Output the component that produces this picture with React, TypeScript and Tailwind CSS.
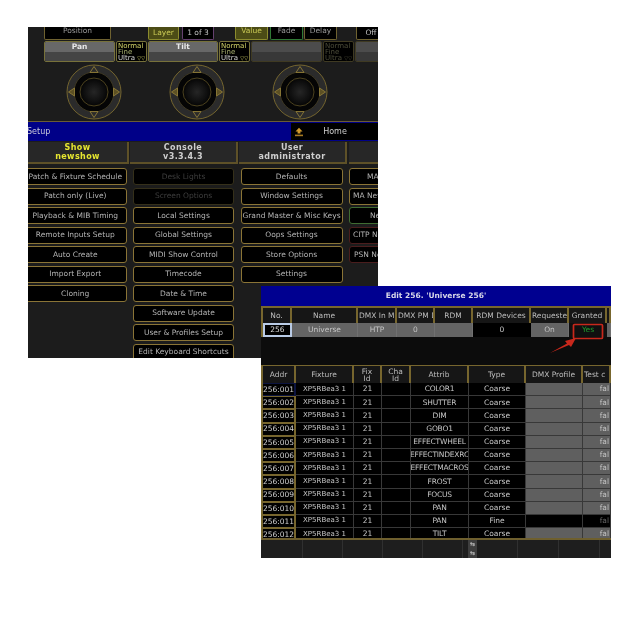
import { Fragment } from "react";

const font = "font-['DejaVu_Sans',sans-serif]";

const col1 = ["Patch & Fixture Schedule", "Patch only (Live)", "Playback & MIB Timing", "Remote Inputs Setup", "Auto Create", "Import Export", "Cloning"];
const col2 = ["Desk Lights", "Screen Options", "Local Settings", "Global Settings", "MIDI Show Control", "Timecode", "Date & Time", "Software Update", "User & Profiles Setup", "Edit Keyboard Shortcuts"];
const col3 = ["Defaults", "Window Settings", "Grand Master & Misc Keys", "Oops Settings", "Store Options", "Settings"];
const col4 = [
  { label: "MA", cls: "border-[#8a7436] pl-[17px]" },
  { label: "MA Net", cls: "border-[#8a7436] pl-[3px]" },
  { label: "Net", cls: "border-[#3f6b32] pl-[20px]" },
  { label: "CITP Ne", cls: "border-[#4a1d1d] pl-[3px]" },
  { label: "PSN Ne", cls: "border-[#4a1d1d] pl-[4px]" },
];

const rows = [
  ["256:001", "COLOR1", "Coarse"],
  ["256:002", "SHUTTER", "Coarse"],
  ["256:003", "DIM", "Coarse"],
  ["256:004", "GOBO1", "Coarse"],
  ["256:005", "EFFECTWHEEL", "Coarse"],
  ["256:006", "EFFECTINDEXRC", "Coarse"],
  ["256:007", "EFFECTMACROS", "Coarse"],
  ["256:008", "FROST", "Coarse"],
  ["256:009", "FOCUS", "Coarse"],
  ["256:010", "PAN", "Coarse"],
  ["256:011", "PAN", "Fine"],
  ["256:012", "TILT", "Coarse"],
];

function Encoder() {
  return (
    <svg width="58" height="58" viewBox="0 0 58 58" fill="none">
      <defs>
        <radialGradient id="knob" cx="50%" cy="50%" r="50%">
          <stop offset="0%" stopColor="#262626" />
          <stop offset="100%" stopColor="#050505" />
        </radialGradient>
      </defs>
      <circle cx="29" cy="29" r="27" fill="#2b2b2b" stroke="#7d6c30" strokeWidth="0.9" />
      <circle cx="29" cy="29" r="20" fill="#050505" stroke="#4c4426" strokeWidth="0.7" />
      <circle cx="29" cy="29" r="14" fill="url(#knob)" stroke="#6a5c2a" strokeWidth="0.7" />
      <path d="M29 3.5 L33 9.5 L25 9.5 Z" stroke="#8f7c38" strokeWidth="0.9" />
      <path d="M29 54.5 L33 48.5 L25 48.5 Z" stroke="#8f7c38" strokeWidth="0.9" />
      <path d="M3.5 29 L9.5 25 L9.5 33 Z" stroke="#8f7c38" strokeWidth="0.9" fill="#5c5024" />
      <path d="M54.5 29 L48.5 25 L48.5 33 Z" stroke="#8f7c38" strokeWidth="0.9" fill="#5c5024" />
    </svg>
  );
}

function TopKey({ label, w, cls, ml }: { label: string; w: string; cls: string; ml: string }) {
  return (
    <div className={`${w} ${ml} ${cls} h-[13px] shrink-0 border border-t-0 rounded-b-[2px] flex justify-center text-[7.5px] leading-[7.5px]`}>
      {label}
    </div>
  );
}

function Fader({ label, w, dim }: { label: string; w: string; dim?: boolean }) {
  return (
    <div className={`${w} h-[21px] shrink-0 border rounded-[2px] flex flex-col overflow-hidden ${dim ? "border-[#3f3a22]" : "border-[#77713a]"}`}>
      <div className={`h-[10px] text-center text-[7.5px] font-bold leading-[10px] text-[#e8e8e8] ${dim ? "bg-[#4c4c4c]" : "bg-[#686868]"}`}>{label}</div>
      <div className={`flex-1 ${dim ? "bg-[#383838]" : "bg-[#454545]"}`} />
    </div>
  );
}

function Mode({ dim }: { dim?: boolean }) {
  return (
    <div className={`relative w-[31px] h-[21px] shrink-0 border rounded-[2px] bg-black px-px text-[7px] leading-[6.2px] pt-px ${dim ? "border-[#3f3a22] text-[#4d4d3a]" : "border-[#77713a] text-[#d4d468]"}`}>
      <div>Normal</div>
      <div className={dim ? "" : "text-[#a8b070]"}>Fine</div>
      <div className={dim ? "" : "text-[#d8d8d8]"}>Ultra</div>
      <span className="absolute right-px bottom-0 text-[5px] leading-[6px]">▽▽</span>
    </div>
  );
}

function Tab({ top, bottom, w, active }: { top: string; bottom: string; w: string; active?: boolean }) {
  return (
    <div className={`${w} h-[22px] shrink-0 border-b-2 border-r-2 border-[#5e5128] bg-[#272727] flex flex-col items-center justify-center text-[8px] font-bold leading-[9px] tracking-[0.4px] ${active ? "text-[#e6e630]" : "text-[#cfcfcf]"}`}>
      <div>{top}</div>
      <div>{bottom}</div>
    </div>
  );
}

function MenuButton({ label, dim }: { label: string; dim?: boolean }) {
  return (
    <div className={`h-[17px] shrink-0 rounded-[3px] border bg-black flex items-center justify-center whitespace-nowrap overflow-hidden text-[7.5px] leading-none ${dim ? "border-[#35301a] text-[#3e3e3e]" : "border-[#8a7436] text-[#b4b4b4]"}`}>
      {label}
    </div>
  );
}

function HeadCell({ children, left }: { children?: React.ReactNode; left?: boolean }) {
  return (
    <div className={`bg-[#161616] border-r-2 border-[#77662e] flex items-center text-center text-[7.5px] leading-[7px] text-[#bdbdbd] whitespace-nowrap overflow-hidden ${left ? "justify-start pl-px" : "justify-center"}`}>
      {children}
    </div>
  );
}

function GrayCell({ children }: { children?: React.ReactNode }) {
  return <div className="bg-[#646464] border-r border-[#707070] flex items-center justify-center text-[7.5px] text-[#c4c4c4] overflow-hidden">{children}</div>;
}

function Cell({ children, cls }: { children?: React.ReactNode; cls?: string }) {
  return <div className={`bg-black border-r border-b border-[#383838] flex items-center justify-center whitespace-nowrap overflow-hidden text-[7.5px] leading-none text-[#c6c6c6] ${cls ?? ""}`}>{children}</div>;
}

export default function App() {
  return (
    <div className={`relative w-[640px] h-[640px] bg-white overflow-hidden blur-[0.45px] ${font}`}>
      {/* first console window */}
      <div className="absolute left-[28px] top-[27px] w-[350px] h-[331px] bg-[#1c1c1c] overflow-hidden flex flex-col">
        <div className="flex h-[13px] shrink-0 text-[#9a9a9a]">
          <TopKey label="Position" w="w-[67px]" ml="ml-[16px]" cls="border-[#6f6230] bg-black" />
          <TopKey label="Layer" w="w-[31px]" ml="ml-[37px]" cls="border-[#8c8c2e] bg-[#4c4c16] text-[#c9c955] pt-[2px]" />
          <TopKey label="1 of 3" w="w-[32px]" ml="ml-[3px]" cls="border-[#65406f] bg-black text-[#c0c0c0] pt-[2px]" />
          <TopKey label="Value" w="w-[33px]" ml="ml-[21px]" cls="border-[#8c8c2e] bg-[#4c4c16] text-[#c9c955]" />
          <TopKey label="Fade" w="w-[33px]" ml="ml-[2px]" cls="border-[#2f7a35] bg-black" />
          <TopKey label="Delay" w="w-[33px]" ml="ml-[1px]" cls="border-[#6f6230] bg-black" />
          <TopKey label="Off" w="w-[30px]" ml="ml-[19px]" cls="border-[#6f6230] bg-black text-[#c0c0c0] pt-[2px]" />
        </div>
        <div className="flex h-[21px] shrink-0 mt-px ml-[16px] gap-px">
          <Fader label="Pan" w="w-[71px]" />
          <Mode />
          <Fader label="Tilt" w="w-[70px]" />
          <Mode />
          <Fader label="" w="w-[71px]" dim />
          <Mode dim />
          <Fader label="" w="w-[40px]" dim />
        </div>
        <div className="flex h-[58px] shrink-0 mt-px ml-[37px] gap-[45px] items-center">
          <Encoder />
          <Encoder />
          <Encoder />
        </div>
        <div className="h-px shrink-0 bg-[#6b5c34]" />
        <div className="h-[19px] shrink-0 bg-[#000088] flex items-center justify-between text-[8px] text-[#c8c8d8] -ml-[1px]">
          <span>Setup</span>
          <div className="w-[87px] h-[17px] bg-black flex items-center text-[#d0d0d0]">
            <svg className="ml-[3px]" width="10" height="10" viewBox="0 0 10 10" fill="none">
              <path d="M5 0.8 L8.5 4.4 H6.4 V6.4 H3.6 V4.4 H1.5 Z" fill="#d19a2c" />
              <path d="M1 7.6 H9 V9.2 H1 Z" fill="#a87a22" />
            </svg>
            <span className="flex-1 text-center pr-[12px]">Home</span>
          </div>
        </div>
        <div className="flex gap-px mt-px shrink-0">
          <Tab top="Show" bottom="newshow" w="w-[101px]" active />
          <Tab top="Console" bottom="v3.3.4.3" w="w-[108px]" />
          <Tab top="User" bottom="administrator" w="w-[108px]" />
          <div className="w-[32px] h-[22px] border-b-2 border-[#5e5128] bg-[#272727] ml-px" />
        </div>
        <div className="flex gap-[6.5px] -ml-[4px] mt-[4px]">
          <div className="w-[102.5px] flex flex-col gap-[2.5px] shrink-0">
            {col1.map((l) => <MenuButton key={l} label={l} />)}
          </div>
          <div className="w-[101px] flex flex-col gap-[2.5px] shrink-0">
            {col2.map((l, i) => <MenuButton key={l} label={l} dim={i < 2} />)}
          </div>
          <div className="w-[102px] flex flex-col gap-[2.5px] shrink-0">
            {col3.map((l) => <MenuButton key={l} label={l} />)}
          </div>
          <div className="w-[102px] flex flex-col gap-[2.5px] shrink-0">
            {col4.map((b) => (
              <div key={b.label} className={`h-[17px] rounded-[3px] border bg-black flex items-center whitespace-nowrap text-[7.5px] text-[#b4b4b4] ${b.cls}`}>
                {b.label}
              </div>
            ))}
          </div>
        </div>
      </div>

      {/* edit universe window */}
      <div className="absolute left-[261px] top-[286px] w-[350px] h-[272px] bg-[#101010] overflow-hidden flex flex-col">
        <div className="h-[20px] shrink-0 bg-[#000090] flex items-center justify-center text-[7.5px] font-bold text-[#d8d8e8]">
          Edit 256. 'Universe 256'
        </div>
        <div className="h-[2px] shrink-0 bg-[#77662e]" />
        <div className="border-l-2 border-[#77662e] grid grid-cols-[29px_66px_39px_38px_38px_58px_38px_38px_4px] grid-rows-[15px_14px] shrink-0">
          <HeadCell>No.</HeadCell>
          <HeadCell>Name</HeadCell>
          <HeadCell left>DMX In Me</HeadCell>
          <HeadCell left>DMX PM De</HeadCell>
          <HeadCell>RDM</HeadCell>
          <HeadCell>RDM Devices</HeadCell>
          <HeadCell left>Requested</HeadCell>
          <HeadCell>Granted</HeadCell>
          <HeadCell />
          <div className="bg-black border-2 border-[#b9cbe6] flex items-center justify-center text-[7.5px] text-[#dcdcdc]">256</div>
          <GrayCell>Universe</GrayCell>
          <GrayCell>HTP</GrayCell>
          <GrayCell>0</GrayCell>
          <GrayCell />
          <div className="bg-black flex items-center justify-center text-[7.5px] text-[#c6c6c6]">0</div>
          <GrayCell>On</GrayCell>
          <div className="bg-[#101010] flex items-center justify-center text-[7.5px] text-[#1f9a2c]">Yes</div>
          <GrayCell />
        </div>
        <div className="h-[28px] shrink-0 bg-[#0c0c0c]" />
        <div className="h-px shrink-0 bg-[#77662e]" />
        <div className="border-l-2 border-[#77662e] grid grid-cols-[33px_58px_28px_29px_58px_57px_57px_28px] grid-rows-[17px] auto-rows-[13.2px] shrink-0 h-[172px] overflow-hidden">
          <HeadCell>Addr</HeadCell>
          <HeadCell>Fixture</HeadCell>
          <HeadCell>Fix<br />Id</HeadCell>
          <HeadCell>Cha<br />Id</HeadCell>
          <HeadCell>Attrib</HeadCell>
          <HeadCell>Type</HeadCell>
          <HeadCell>DMX Profile</HeadCell>
          <HeadCell left>Test c</HeadCell>
          {rows.map((r, i) => (
            <Fragment key={r[0]}>
              <div className={`bg-black border-y border-r-2 flex items-center justify-center text-[7.5px] leading-none text-[#cfcfcf] ${i === 0 ? "border-[#0c1440]" : "border-[#77662e]"}`}>{r[0]}</div>
              <Cell cls="text-[7px]!">XP5RBea3 1</Cell>
              <Cell>21</Cell>
              <Cell />
              <Cell cls="tracking-[-0.2px]">{r[1]}</Cell>
              <Cell>{r[2]}</Cell>
              {r[2] === "Fine" ? <Cell /> : <Cell cls="bg-[#5f5f5f]!" />}
              {r[2] === "Fine" ? (
                <Cell cls="justify-end! pr-px text-[#666]!">fal</Cell>
              ) : (
                <Cell cls="bg-[#5f5f5f]! justify-end! pr-px">fal</Cell>
              )}
            </Fragment>
          ))}
        </div>
        <div className="h-[1.5px] shrink-0 bg-[#6e5f2e]" />
        <div className="flex-1 bg-[#1e1e1e] flex pl-[41px]">
          {[0, 1, 2, 3].map((i) => <div key={i} className="w-[40px] shrink-0 border-l border-[#303030]" />)}
          <div className="w-[6px] shrink-0 border-l border-[#303030]" />
          <div className="w-[9px] shrink-0 bg-[#3e3e3e] flex flex-col items-center justify-center gap-[3px] text-[6px] leading-none text-[#ddd]">
            <span>⇆</span>
            <span>⇆</span>
          </div>
          {[0, 1, 2].map((i) => <div key={i} className="w-[41px] shrink-0 border-r border-[#303030]" />)}
        </div>
      </div>

      {/* red annotation over the Granted cell */}
      <svg className="absolute left-[545px] top-[322px]" width="64" height="36" viewBox="0 0 64 36" fill="none">
        <rect x="28.5" y="2.5" width="29" height="14" rx="1" stroke="#c8281c" strokeWidth="1.7" />
        <path d="M5 31 L22 21.5 L20 19 L31 16 L26 25 L24 23 Z" fill="#c8281c" />
      </svg>
    </div>
  );
}
